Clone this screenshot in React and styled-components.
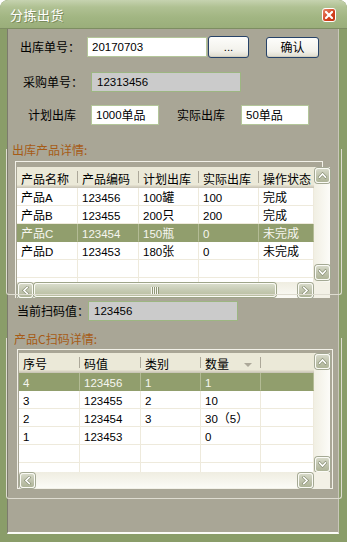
import React from "react";
import styled, { createGlobalStyle } from "styled-components";

const Global = createGlobalStyle`
  html, body { margin: 0; padding: 0; background: #fff; }
  body { font-family: "Noto Sans CJK SC", "Liberation Sans", sans-serif; font-size: 12px; color: #000; }
`;

const CJK = /[\u2E80-\u9FFF\uFF00-\uFFEF\u3000-\u303F]/;
const Lat = styled.span`
  font-family: "Liberation Sans", Arial, sans-serif;
  font-size: 11.5px;
`;
function T({ children }) {
  const s = String(children);
  const parts = s.split(/([\u2E80-\u9FFF\uFF00-\uFFEF\u3000-\u303F]+)/);
  return parts.map((p, i) =>
    p === "" ? null : CJK.test(p) ? <span key={i}>{p}</span> : <Lat key={i}>{p}</Lat>
  );
}

const Window = styled.div`
  width: 347px;
  height: 542px;
  box-sizing: border-box;
  background: #8a9d69;
  border-radius: 8px 8px 0 0;
  display: flex;
  flex-direction: column;
  padding: 0 8px 8px 7px;
  overflow: hidden;
`;

const TitleBar = styled.div`
  flex: none;
  height: 29px;
  margin: 0 -8px 0 -7px;
  box-sizing: border-box;
  border-radius: 8px 8px 0 0;
  background: linear-gradient(#c6d3b0 0%, #b0c193 25%, #a2b683 60%, #9aae7a 100%);
  border-bottom: 1px solid #7d8d62;
  display: flex;
  align-items: center;
  justify-content: space-between;
  padding: 0 11px 0 10px;
`;

const Title = styled.div`
  color: #fff;
  font-size: 13px;
  line-height: 16px;
  margin-top: 2px;
  text-shadow: 1px 1px 0 #7a8a5c;
  letter-spacing: 0.5px;
`;

const CloseBtn = styled.div`
  width: 14px;
  height: 14px;
  box-sizing: border-box;
  border: 1px solid #fff;
  border-radius: 3px;
  background: linear-gradient(135deg, #e9886c, #d2401d 60%, #c33614);
  display: flex;
  align-items: center;
  justify-content: center;
  margin-top: 2px;
`;

const Client = styled.div`
  flex: 1;
  background: #a9a696;
  border-left: 1px solid #7c7b6d;
  border-right: 1px solid #c9c7b9;
  border-bottom: 2px solid #fbfbf7;
  display: flex;
  flex-direction: column;
  position: relative;
`;

const Row = styled.div`
  display: flex;
  align-items: center;
  height: ${(p) => p.$h || 20}px;
  margin-top: ${(p) => p.$mt || 0}px;
  padding-left: ${(p) => p.$pl || 0}px;
`;

const Label = styled.div`
  width: ${(p) => p.$w}px;
  margin-left: ${(p) => p.$ml || 0}px;
  flex: none;
  line-height: 16px;
  white-space: nowrap;
`;

const Input = styled.div`
  width: ${(p) => p.$w}px;
  height: ${(p) => p.$h || 20}px;
  box-sizing: border-box;
  flex: none;
  border: 1px solid ${(p) => (p.$ro ? "#9db682" : "#b4c69a")};
  background: ${(p) => (p.$ro ? "#cbcbcb" : "#ffffff")};
  padding-left: ${(p) => (p.$ro ? 5 : 4)}px;
  display: flex;
  align-items: center;
  line-height: 16px;
  white-space: nowrap;
`;

const Button = styled.div`
  width: ${(p) => p.$w}px;
  height: ${(p) => p.$h}px;
  margin-left: ${(p) => p.$ml || 0}px;
  flex: none;
  box-sizing: border-box;
  border: 1px solid #264268;
  border-radius: 3px;
  background: linear-gradient(#fdfdfb, #f2f1eb 70%, #dedbcd);
  box-shadow: inset 0 -1px 0 #d3cfbf;
  display: flex;
  align-items: center;
  justify-content: center;
  line-height: 16px;
`;

const Section = styled.div`
  color: #a65b16;
  height: 16px;
  line-height: 16px;
  margin-top: ${(p) => p.$mt}px;
  padding-left: ${(p) => p.$pl}px;
`;

const Panel = styled.div`
  margin-top: ${(p) => p.$mt}px;
  margin-left: ${(p) => p.$ml}px;
  width: ${(p) => p.$w}px;
  box-sizing: border-box;
  border: 1px solid #f2f1e8;
  border-bottom: ${(p) => (p.$bb ? "1px solid #f2f1e8" : "none")};
  padding: ${(p) => p.$pt}px 0 0 1px;
`;

const GridBox = styled.div`
  width: ${(p) => p.$w}px;
  height: ${(p) => p.$h}px;
  display: grid;
  grid-template-columns: 1fr 16px;
  grid-template-rows: 1fr 16px;
  background: #fff;
`;

const Cells = styled.div`
  overflow: hidden;
  display: flex;
  flex-direction: column;
  background: #fff;
`;

const HeadRow = styled.div`
  flex: none;
  display: flex;
  height: ${(p) => p.$h}px;
  box-sizing: border-box;
  background: #ebe9d8;
  box-shadow: inset 0 -1px 0 #cbc7b8, inset 0 -2px 0 #d6d2c2, inset 0 -3px 0 #e2decd;
`;

const HeadCell = styled.div`
  width: ${(p) => (p.$w ? `${p.$w}px` : "auto")};
  flex: ${(p) => (p.$w ? "none" : "1")};
  box-sizing: border-box;
  position: relative;
  padding: 2px 0 0 4px;
  display: flex;
  align-items: center;
  white-space: nowrap;
  overflow: hidden;
  line-height: 16px;
  &::after {
    content: "";
    display: ${(p) => (p.$w ? "block" : "none")};
    position: absolute;
    right: 0;
    top: 4px;
    bottom: 5px;
    width: 1px;
    background: #aca899;
    box-shadow: 1px 0 0 #fff;
  }
`;

const SortArrow = styled.span`
  width: 0;
  height: 0;
  margin-left: 15px;
  margin-top: 1px;
  border-left: 4px solid transparent;
  border-right: 4px solid transparent;
  border-top: 4px solid #aca899;
`;

const BodyRow = styled.div`
  flex: none;
  display: flex;
  height: 18px;
  background: ${(p) => (p.$sel ? "#919e6d" : "#fff")};
  color: ${(p) => (p.$sel ? "#f6f6f0" : "#000")};
`;

const Cell = styled.div`
  width: ${(p) => (p.$w ? `${p.$w}px` : "auto")};
  flex: ${(p) => (p.$w ? "none" : "1")};
  box-sizing: border-box;
  border-right: 1px solid ${(p) => (p.$sel ? "#b3bb95" : "#eeeadc")};
  border-bottom: 1px solid ${(p) => (p.$sel ? "#919e6d" : "#eeeadc")};
  padding-left: 4px;
  line-height: 17px;
  white-space: nowrap;
  overflow: hidden;
`;

const VScroll = styled.div`
  display: flex;
  flex-direction: column;
  justify-content: space-between;
  align-items: center;
  background: linear-gradient(90deg, #f1efe3, #fcfcf8);
  padding: 1px 0 ${(p) => p.$pb}px;
`;

const HScroll = styled.div`
  display: flex;
  align-items: center;
  background: linear-gradient(#efede1, #fbfbf6);
  padding: 0 1px;
`;

const Corner = styled.div`
  background: #f3f1e6;
`;

const SBtn = styled.div`
  width: 15px;
  height: 15px;
  flex: none;
  box-sizing: border-box;
  border: 1px solid #fbfbf6;
  border-radius: 3px;
  background: linear-gradient(#d6d9c8, #bfc3ad 55%, #aeb497);
  box-shadow: 0 0 0 1px #a4a994;
  display: flex;
  align-items: center;
  justify-content: center;
`;

const Thumb = styled.div`
  flex: none;
  width: ${(p) => p.$w}px;
  height: 14px;
  margin-left: 1px;
  box-sizing: border-box;
  border: 1px solid #fbfbf5;
  border-radius: 3px;
  background: linear-gradient(#d8dccb, #c6cbb4 50%, #b8be9f);
  box-shadow: 0 0 0 1px #9ea58a;
  display: flex;
  align-items: center;
  justify-content: center;
`;

const Grip = styled.div`
  width: 8px;
  height: 7px;
  background: repeating-linear-gradient(90deg, #f7f7f2 0 1px, #8f9776 1px 2px);
`;

const Track = styled.div`
  flex: 1;
`;

const GroupLine = styled.div`
  position: absolute;
  left: -2px;
  top: ${(p) => p.$top}px;
  height: ${(p) => p.$h}px;
  right: -4px;
  border: 1px solid #dedcd0;
  border-top: none;
  border-radius: 0 0 3px 3px;
  pointer-events: none;
`;

function Chevron({ dir }) {
  const rot = { up: 0, down: 180, left: -90, right: 90 }[dir];
  return (
    <svg width="9" height="9" viewBox="0 0 9 9" style={{ transform: `rotate(${rot}deg)` }}>
      <path d="M1.5 6.2 L4.5 3 L7.5 6.2" fill="none" stroke="#8c9378" strokeWidth="3" strokeLinecap="square" />
      <path d="M1.5 6.2 L4.5 3 L7.5 6.2" fill="none" stroke="#ffffff" strokeWidth="1.6" strokeLinecap="square" />
    </svg>
  );
}

function DataGrid({ w, h, headH, cols, head, rows, sel, sortCol, thumb, vpb }) {
  return (
    <GridBox $w={w} $h={h}>
      <Cells>
        <HeadRow $h={headH}>
          {head.map((c, i) => (
            <HeadCell key={i} $w={cols[i]}>
              <T>{c}</T>
              {sortCol === i && <SortArrow />}
            </HeadCell>
          ))}
        </HeadRow>
        {rows.map((r, ri) => (
          <BodyRow key={ri} $sel={ri === sel}>
            {cols.map((cw, ci) => (
              <Cell key={ci} $w={cw} $sel={ri === sel}>
                <T>{r[ci] || ""}</T>
              </Cell>
            ))}
          </BodyRow>
        ))}
      </Cells>
      <VScroll $pb={vpb}>
        <SBtn><Chevron dir="up" /></SBtn>
        <SBtn><Chevron dir="down" /></SBtn>
      </VScroll>
      <HScroll>
        <SBtn><Chevron dir="left" /></SBtn>
        {thumb ? (
          <Thumb $w={thumb}><Grip /></Thumb>
        ) : null}
        <Track />
        <SBtn><Chevron dir="right" /></SBtn>
      </HScroll>
      <Corner />
    </GridBox>
  );
}

const products = [
  ["产品A", "123456", "100罐", "100", "完成"],
  ["产品B", "123455", "200只", "200", "完成"],
  ["产品C", "123454", "150瓶", "0", "未完成"],
  ["产品D", "123453", "180张", "0", "未完成"],
  [],
  [],
  [],
];

const scans = [
  ["4", "123456", "1", "1"],
  ["3", "123455", "2", "10"],
  ["2", "123454", "3", "30（5）"],
  ["1", "123453", "", "0"],
  [],
  [],
  [],
];

export default function App() {
  return (
    <>
      <Global />
      <Window>
        <TitleBar>
          <Title>分拣出货</Title>
          <CloseBtn>
            <svg width="8" height="8" viewBox="0 0 8 8">
              <path d="M1 1 L7 7 M7 1 L1 7" stroke="#fff" strokeWidth="2.2" strokeLinecap="square" />
            </svg>
          </CloseBtn>
        </TitleBar>
        <Client>
          <Row $mt={7} $h={22} $pl={12}>
            <Label $w={67}>出库单号：</Label>
            <Input $w={120}><T>20170703</T></Input>
            <Button $w={41} $h={22} $ml={1}><T>...</T></Button>
            <Button $w={53} $h={21} $ml={17}>确认</Button>
          </Row>
          <Row $mt={14} $pl={15}>
            <Label $w={68}>采购单号：</Label>
            <Input $w={150} $ro><T>12313456</T></Input>
          </Row>
          <Row $mt={12} $h={21} $pl={20}>
            <Label $w={63}>计划出库</Label>
            <Input $w={68}><T>1000单品</T></Input>
            <Label $w={64} $ml={18}>实际出库</Label>
            <Input $w={68}><T>50单品</T></Input>
          </Row>
          <Section $mt={17} $pl={4}>出库产品详情:</Section>
          <Panel $mt={3} $ml={7} $w={308} $pt={5}>
            <DataGrid
              w={313}
              h={131}
              headH={21}
              cols={[61, 61, 60, 60, null]}
              head={["产品名称", "产品编码", "计划出库", "实际出库", "操作状态"]}
              rows={products}
              sel={2}
              thumb={242}
              vpb={2}
            />
          </Panel>
          <Row $mt={3} $pl={9}>
            <Label $w={71}>当前扫码值：</Label>
            <Input $w={150} $ro><T>123456</T></Input>
          </Row>
          <Section $mt={10} $pl={6}>产品C扫码详情:</Section>
          <Panel $mt={2} $ml={9} $w={316} $pt={3} $bb>
            <DataGrid
              w={311}
              h={135}
              headH={20}
              cols={[61, 61, 60, 60, null]}
              head={["序号", "码值", "类别", "数量", ""]}
              rows={scans}
              sel={0}
              sortCol={3}
              vpb={0}
            />
          </Panel>
          <GroupLine $top={120} $h={145} />
          <GroupLine $top={309} $h={160} />
        </Client>
      </Window>
    </>
  );
}
